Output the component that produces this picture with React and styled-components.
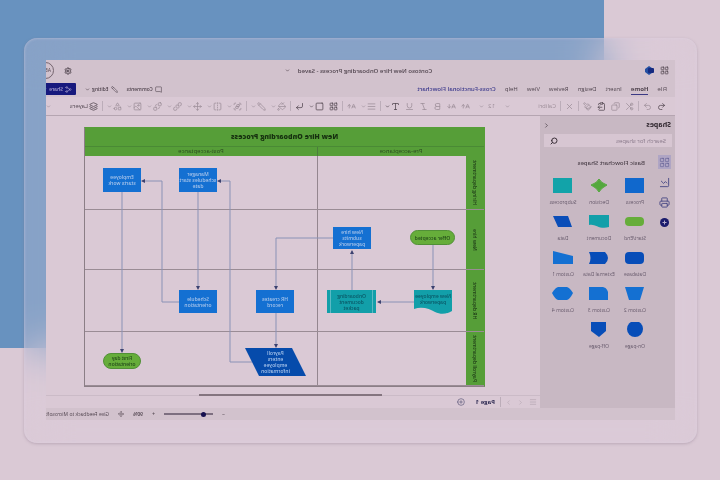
import React from 'react';
import styled, { createGlobalStyle, css } from 'styled-components';
import {
  AArrowDown,
  AArrowUp,
  AlignJustify,
  Bold,
  BringToFront,
  ChevronDown,
  ChevronLeft,
  ChevronRight,
  ClipboardPaste,
  Copy,
  CornerDownRight,
  FlipHorizontal,
  Group,
  Image,
  Italic,
  Layers,
  LayoutGrid,
  LineChart,
  Menu,
  MessageSquare,
  Move,
  PaintBucket,
  Paintbrush,
  Pencil,
  PlusCircle,
  Printer,
  Redo2,
  Scissors,
  Search,
  SendToBack,
  Settings,
  Share2,
  Shapes,
  Square,
  Type,
  Underline,
  Undo2,
  X,
} from 'lucide-react';

const GlobalStyle = createGlobalStyle`
  * {
    box-sizing: border-box;
  }
  body {
    margin: 0;
    background: #dac9d5;
    font-family: 'Open Sans', 'Noto Sans', sans-serif;
  }
  button {
    font: inherit;
    color: inherit;
    background: none;
    border: 0;
    padding: 0;
  }
`;

/* The whole scene is shown as its mirror image */
const Scene = styled.main`
  position: relative;
  min-height: 100vh;
  padding: 38px 24px 37px 23px;
  overflow: hidden;
  transform: scaleX(-1);
  background: #dac9d5;
  color: #51454f;
  font-size: 6px;
  line-height: 8px;
`;

const Backdrop = styled.div`
  position: absolute;
  top: 0;
  right: 0;
  left: 116px;
  height: 348px;
  background: #6892bf;
`;

const Frame = styled.div`
  position: relative;
  padding: 22px 22px 23px;
  border-radius: 13px;
  background: rgba(222, 206, 220, 0.27);
  backdrop-filter: blur(22px);
  box-shadow:
    0 1px 3px rgba(130, 110, 130, 0.35),
    inset 0 0 3px rgba(222, 210, 226, 0.6);
`;

const Window = styled.div`
  overflow: hidden;
  background: #d2c2cd;
`;

const Row = styled.div`
  display: flex;
  align-items: center;
  white-space: nowrap;
`;

const TitleBar = styled(Row)`
  height: 21px;
  padding-left: 6px;
  gap: 6px;
`;

const Title = styled.h1`
  display: flex;
  align-items: center;
  justify-content: center;
  gap: 8px;
  flex: 1;
  margin: 0;
  font-size: 6px;
  font-weight: 600;
`;

const Logo = styled.svg`
  width: 9px;
  height: 9px;
`;

const Avatar = styled.div`
  width: 17px;
  height: 17px;
  margin: 0 -9px 0 4px;
  padding-left: 2px;
  border: 1px solid #75656f;
  border-radius: 50%;
  font-size: 5px;
  line-height: 15px;
`;

const TabBar = styled(Row)`
  height: 16px;
  padding-left: 8px;
  gap: 9px;
`;

const Tab = styled.button`
  height: 11px;
  border-bottom: 1px solid transparent;
  ${({ $active }) =>
    $active &&
    css`
      font-weight: 700;
      border-color: #3c3a85;
    `}
  ${({ $accent }) =>
    $accent &&
    css`
      color: #3f3c8e;
      font-weight: 600;
    `}
`;

const TabActions = styled(Row)`
  gap: 9px;
  margin: 0 -10px 0 auto;
`;

const Action = styled.button`
  display: flex;
  align-items: center;
  gap: 2px;
  font-size: 5px;
  font-weight: 600;
`;

const ShareButton = styled(Action)`
  height: 12px;
  width: 40px;
  padding-left: 4px;
  background: #17197d;
  color: #a9a0cf;
  border-radius: 1px;
`;

const Toolbar = styled(Row)`
  height: 19px;
  padding-left: 9px;
  gap: 5px;
  background: #dac9d5;
  border-bottom: 1px solid #b5a5b1;
  color: #9c8d98;
`;

const Tool = styled.button`
  display: flex;
  align-items: center;
  gap: 1px;
  flex: none;
  color: ${({ $dark }) => ($dark ? '#51454f' : 'inherit')};
`;

const FontSize = styled(Tool)`
  padding: 0 4px;
  gap: 4px;
`;

const Overflow = styled(Tool)`
  margin-left: auto;
`;

const Divider = styled.span`
  flex: none;
  width: 1px;
  height: 10px;
  margin: 0 -1px;
  background: #bcadb9;
`;

const FontName = styled.button`
  display: flex;
  justify-content: space-between;
  align-items: center;
  width: 52px;
  padding-right: 1px;
`;

const Body = styled.div`
  display: flex;
  background: #dac9d5;
`;

const Panel = styled.aside`
  flex: none;
  width: 135px;
  background: #c8b8c3;
`;

const PanelHeader = styled(Row)`
  height: 18px;
  justify-content: space-between;
  padding: 0 3px 0 4px;
  color: #2e252d;
`;

const PanelTitle = styled.h2`
  margin: 0;
  font-size: 7px;
  font-weight: 700;
`;

const SearchBox = styled.label`
  display: flex;
  align-items: center;
  height: 13px;
  margin: 0 4px 0 3px;
  padding: 0 6px;
  background: #d7c6d2;
`;

const SearchInput = styled.input`
  flex: 1;
  min-width: 0;
  padding: 0;
  border: 0;
  outline: 0;
  background: none;
  font: inherit;
  &::placeholder {
    color: #89798a;
    opacity: 1;
  }
`;

const PanelBody = styled.div`
  display: flex;
  padding-top: 8px;
`;

const Rail = styled.nav`
  display: flex;
  flex-direction: column;
  align-items: center;
  gap: 6px;
  width: 20px;
  color: #4a4a86;
`;

const RailButton = styled.button`
  display: flex;
  align-items: center;
  justify-content: center;
  width: 13px;
  height: 14px;
  background: ${({ $active }) => ($active ? '#afa5c4' : 'none')};
`;

const Palette = styled.section`
  flex: 1;
  padding-top: 4px;
`;

const PaletteTitle = styled.h3`
  margin: 0 0 11px 10px;
  font-size: 6px;
  line-height: 8px;
  font-weight: 600;
`;

const PaletteGrid = styled.div`
  display: grid;
  grid-template-columns: repeat(3, 36px);
  grid-auto-rows: 36px;
  margin-left: 2px;
`;

const Stencil = styled.button`
  display: flex;
  flex-direction: column;
  align-items: center;
  gap: 6px;
  font-size: 5px;
  line-height: 7px;
  white-space: nowrap;
  color: #65586a;
`;

const StencilShape = styled.svg`
  width: 21px;
  height: 15px;
`;

const Workspace = styled.div`
  flex: 1;
  min-width: 0;
`;

const Canvas = styled.div`
  padding: 11px 0 7px 55px;
  overflow: hidden;
`;

const Chart = styled.div`
  position: relative;
  width: 401px;
  border: 1px solid #8b7e86;
  border-top-color: #569e38;
  border-left-color: #569e38;
  font-size: 5px;
  line-height: 6px;
  color: #2a4a20;
`;

const ChartTitle = styled.h2`
  margin: 0;
  background: #569e38;
  color: #16300f;
  font-size: 7px;
  font-weight: 800;
  line-height: 18px;
  text-align: center;
`;

const Phases = styled.div`
  display: grid;
  grid-template-columns: 166px 1fr;
  background: #569e38;
  border-top: 1px solid #4a8a35;
`;

const Phase = styled.div`
  font-size: 6px;
  line-height: 9px;
  text-align: center;
  & + & {
    border-left: 1px solid #4b7d3c;
  }
`;

const Lane = styled.div`
  display: grid;
  grid-template-columns: 18px 148px 1fr;
  height: ${({ $height }) => $height}px;
  border-bottom: 1px solid #9a8c95;
  &:last-of-type {
    border-bottom: 0;
  }
`;

const LaneName = styled.div`
  display: flex;
  align-items: center;
  justify-content: center;
  background: #569e38;
  writing-mode: sideways-lr;
  font-weight: 600;
  white-space: nowrap;
  color: #1d3a17;
`;

const LaneCell = styled.div`
  & + & {
    border-left: 1px solid #94868f;
  }
`;

const Connectors = styled.svg`
  position: absolute;
  top: -1px;
  left: -1px;
  width: 401px;
  height: 260px;
  fill: none;
  stroke: #8a92b6;
  stroke-width: 1;
`;

const kinds = {
  process: css`
    background: #1470d2;
  `,
  terminal: css`
    background: #66ad3a;
    border: 1px solid #519037;
    border-radius: 8px;
    color: #244c1a;
  `,
  document: css`
    background: #129fa9;
    color: #0a5867;
    padding-bottom: 6px;
    clip-path: path('M0 0H38V19C30 16 22 19 17 22C11 25 5 24 0 21Z');
  `,
  subprocess: css`
    background: #129fa9;
    color: #0a5867;
    box-shadow:
      inset 3px 0 #129fa9,
      inset 4px 0 #5cb9c4,
      inset -3px 0 #129fa9,
      inset -4px 0 #5cb9c4;
  `,
  data: css`
    background: #064bab;
    clip-path: polygon(23% 0, 100% 0, 77% 100%, 0 100%);
  `,
};

const Node = styled.div`
  position: absolute;
  display: flex;
  align-items: center;
  justify-content: center;
  left: ${({ $x }) => $x - 1}px;
  top: ${({ $y }) => $y - 1}px;
  width: ${({ $w }) => $w}px;
  height: ${({ $h }) => $h}px;
  color: #a6c3ea;
  font-weight: 600;
  text-align: center;
  white-space: pre;
  ${({ $kind }) => kinds[$kind]}
`;

const ScrollTrack = styled.div`
  height: 2px;
  border-bottom: 1px solid #cbbbc7;
`;

const ScrollThumb = styled.div`
  width: 37%;
  height: 2px;
  margin-left: 32%;
  background: #84757f;
`;

const PageTabs = styled(Row)`
  height: 12px;
  padding-left: 3px;
  gap: 5px;
  color: #b3a4b0;
`;

const PageTab = styled.button`
  padding: 0 6px 0 1px;
  font-weight: 700;
  color: #2a2750;
`;

const StatusBar = styled(Row)`
  height: 12px;
  justify-content: flex-end;
  gap: 9px;
  background: #d2c2cd;
  font-size: 5px;
  font-weight: 600;
`;

const Zoom = styled.input`
  appearance: none;
  width: 49px;
  height: 2px;
  margin: 0;
  background: #7d6f80;
  &::-webkit-slider-thumb {
    appearance: none;
    width: 5px;
    height: 5px;
    border-radius: 50%;
    background: #15104f;
  }
`;

const Feedback = styled.a`
  color: inherit;
  font-weight: 400;
  text-decoration: none;
`;

const stencils = [
  ['Process', '#1068cd', <path d="M1 0H20V15H1Z" />],
  ['Decision', '#54a83d', <path d="M10 1Q12 5 18 7Q12 10 10 14Q8 10 2 7Q8 5 10 1Z" stroke="#54a83d" />],
  ['Subprocess', '#12a3a9', <path d="M1 0H20V15H1Z" />],
  ['Start/End', '#66ad3a', <rect x="1" y="3" width="19" height="9" rx="4" />],
  ['Document', '#129fa9', <path d="M0 1H20V11C14 9 10 16 0 13Z" />],
  ['Data', '#0a4db8', <path d="M5 2H20L15 13H1Z" />],
  ['Database', '#074db8', <rect x="1" y="2" width="19" height="12" rx="4" />],
  ['External Data', '#074db8', <path d="M4 2H20Q17 8 20 14H4Q-2 8 4 2Z" />],
  ['Custom 1', '#1470d2', <path d="M0 6L20 1V14H0Z" />],
  ['Custom 2', '#1470d2', <path d="M1 1H20L16 14H5Z" />],
  ['Custom 3', '#1470d2', <path d="M6 1H20V14H1V6Q2 2 6 1Z" />],
  ['Custom 4', '#1470d2', <path d="M6 1H15Q18 2 21 7Q18 13 15 14H6Q3 13 0 7Q3 2 6 1Z" />],
  ['On-page', '#074db8', <circle cx="10" cy="7" r="8" />],
  ['Off-page', '#074db8', <path d="M3 0H18V9L10 15L3 9Z" />],
];

const lanes = [
  ['Hiring department', 54],
  ['New hire', 60],
  ['HR department', 62],
  ['Payroll department', 54],
];

const nodes = [
  { kind: 'terminal', x: 30, y: 103, w: 45, h: 15, text: 'Offer accepted' },
  { kind: 'document', x: 33, y: 163, w: 38, h: 24, text: 'New employee\npaperwork' },
  { kind: 'subprocess', x: 109, y: 163, w: 49, h: 23, text: 'Onboarding\ndocument\npacket' },
  { kind: 'process', x: 114, y: 100, w: 38, h: 22, text: 'New hire\nsubmits\npaperwork' },
  { kind: 'process', x: 191, y: 163, w: 38, h: 23, text: 'HR creates\nrecord' },
  { kind: 'data', x: 179, y: 221, w: 61, h: 28, text: 'Payroll\nenters\nemployee\ninformation' },
  { kind: 'process', x: 268, y: 41, w: 38, h: 24, text: 'Manager\nschedules start\ndate' },
  { kind: 'process', x: 268, y: 163, w: 38, h: 23, text: 'Schedule\norientation' },
  { kind: 'process', x: 344, y: 41, w: 38, h: 24, text: 'Employee\nstarts work' },
  { kind: 'terminal', x: 344, y: 226, w: 38, h: 16, text: 'First day\norientation' },
];

const routes = [
  'M52 118V162',
  'M71 175H107',
  'M133 163V124',
  'M152 111H209V162',
  'M209 186V220',
  'M233 235H255V54H267',
  'M287 65V162',
  'M306 175H323V54H343',
  'M363 65V225',
];

const arrangeTools = [Group, FlipHorizontal, Move, BringToFront, SendToBack, Image, Shapes];

const Caret = () => <ChevronDown size={5} strokeWidth={3} />;

const ToolButton = ({ icon: Icon, menu, dark, label }) => (
  <Tool $dark={dark} aria-label={label}>
    <Icon size={9} strokeWidth={2} />
    {menu && <Caret />}
  </Tool>
);

const Ribbon = () => (
  <Toolbar>
    <ToolButton icon={Undo2} dark label="Undo" />
    <ToolButton icon={Redo2} label="Redo" />
    <Divider />
    <ToolButton icon={Scissors} label="Cut" />
    <ToolButton icon={Copy} label="Copy" />
    <ToolButton icon={ClipboardPaste} dark label="Paste" />
    <ToolButton icon={Paintbrush} label="Format painter" />
    <Divider />
    <ToolButton icon={X} label="Clear" />
    <Divider />
    <FontName>
      Calibri <Caret />
    </FontName>
    <FontSize>
      12
      <Caret />
    </FontSize>
    <ToolButton icon={AArrowUp} label="Grow font" />
    <ToolButton icon={AArrowDown} label="Shrink font" />
    <ToolButton icon={Bold} label="Bold" />
    <ToolButton icon={Italic} label="Italic" />
    <ToolButton icon={Underline} label="Underline" />
    <ToolButton icon={Type} menu dark label="Font color" />
    <Divider />
    <ToolButton icon={AlignJustify} menu label="Align" />
    <ToolButton icon={AArrowUp} label="Text direction" />
    <Divider />
    <ToolButton icon={LayoutGrid} dark label="Text box" />
    <ToolButton icon={Square} menu dark label="Shape" />
    <ToolButton icon={CornerDownRight} dark label="Connector" />
    <Divider />
    <ToolButton icon={PaintBucket} menu label="Fill" />
    <ToolButton icon={Pencil} menu label="Outline" />
    <Divider />
    {arrangeTools.map((icon, i) => (
      <ToolButton key={i} icon={icon} menu label={`Arrange ${i + 1}`} />
    ))}
    <Divider />
    <Tool $dark>
      <Layers size={9} />
      Layers
    </Tool>
    <Overflow aria-label="More">
      <Caret />
    </Overflow>
  </Toolbar>
);

const ShapesPanel = () => (
  <Panel>
    <PanelHeader>
      <PanelTitle>Shapes</PanelTitle>
      <Tool aria-label="Collapse">
        <ChevronLeft size={7} color="#2e252d" />
      </Tool>
    </PanelHeader>
    <SearchBox>
      <SearchInput type="text" placeholder="Search for shapes" aria-label="Search for shapes" />
      <Search size={8} strokeWidth={3} color="#3b3039" />
    </SearchBox>
    <PanelBody>
      <Rail>
        <RailButton $active aria-label="Shapes">
          <LayoutGrid size={11} strokeWidth={1} />
        </RailButton>
        <RailButton aria-label="Charts">
          <LineChart size={11} strokeWidth={2} />
        </RailButton>
        <RailButton aria-label="Stencils">
          <Printer size={11} strokeWidth={2} />
        </RailButton>
        <RailButton aria-label="Add shapes">
          <Logo viewBox="0 0 9 9">
            <circle cx="4.500" cy="4.500" r="4.500" fill="#1b1b6c" />
            <path d="M4.500 2.500V6.500M2.500 4.500H6.500" stroke="#b4aaca" />
          </Logo>
        </RailButton>
      </Rail>
      <Palette>
        <PaletteTitle>Basic Flowchart Shapes</PaletteTitle>
        <PaletteGrid>
          {stencils.map(([name, color, shape]) => (
            <Stencil key={name}>
              <StencilShape viewBox="0 0 21 15" fill={color}>
                {shape}
              </StencilShape>
              {name}
            </Stencil>
          ))}
        </PaletteGrid>
      </Palette>
    </PanelBody>
  </Panel>
);

const Flowchart = () => (
  <Chart>
    <ChartTitle>New Hire Onboarding Process</ChartTitle>
    <Phases>
      <Phase>Pre-acceptance</Phase>
      <Phase>Post-acceptance</Phase>
    </Phases>
    {lanes.map(([name, height]) => (
      <Lane key={name} $height={height}>
        <LaneName>{name}</LaneName>
        <LaneCell />
        <LaneCell />
      </Lane>
    ))}
    <Connectors viewBox="0 0 401 260">
      <defs>
        <marker id="arrow" viewBox="0 0 4 4" refX="3" refY="2" markerWidth="4" markerHeight="4" orient="auto">
          <path d="M0 0L4 2L0 4Z" fill="#3c4270" stroke="none" />
        </marker>
      </defs>
      {routes.map((d) => (
        <path key={d} d={d} markerEnd="url(#arrow)" />
      ))}
    </Connectors>
    {nodes.map(({ kind, x, y, w, h, text }) => (
      <Node key={text} $kind={kind} $x={x} $y={y} $w={w} $h={h}>
        {text}
      </Node>
    ))}
  </Chart>
);

const App = () => {
  return (
    <>
      <GlobalStyle />
      <Scene>
        <Backdrop />
        <Frame>
          <Window>
            <TitleBar>
              <LayoutGrid size={9} />
              <Logo viewBox="0 0 9 9">
                <path d="M5 0L9 3V6L5 9L2 7V2Z" fill="#2450a2" />
                <rect y="2" width="6" height="5" rx="1" fill="#152a80" />
              </Logo>
              <Title>
                Contoso New Hire Onboarding Process - Saved
                <Caret />
              </Title>
              <Settings size={8} strokeWidth={3} />
              <Avatar>AB</Avatar>
            </TitleBar>
            <TabBar>
              <Tab>File</Tab>
              <Tab $active>Home</Tab>
              <Tab>Insert</Tab>
              <Tab>Design</Tab>
              <Tab>Review</Tab>
              <Tab>View</Tab>
              <Tab>Help</Tab>
              <Tab $accent>Cross-Functional Flowchart</Tab>
              <TabActions>
                <Action>
                  <MessageSquare size={7} />
                  Comments
                </Action>
                <Action>
                  <Pencil size={7} />
                  Editing
                  <Caret />
                </Action>
                <ShareButton>
                  <Share2 size={7} />
                  Share
                  <Caret />
                </ShareButton>
              </TabActions>
            </TabBar>
            <Ribbon />
            <Body>
              <ShapesPanel />
              <Workspace>
                <Canvas>
                  <Flowchart />
                </Canvas>
                <ScrollTrack>
                  <ScrollThumb />
                </ScrollTrack>
                <PageTabs>
                  <Menu size={8} />
                  <ChevronLeft size={7} />
                  <ChevronRight size={7} />
                  <Divider />
                  <PageTab>Page 1</PageTab>
                  <PlusCircle size={8} color="#5c5878" />
                </PageTabs>
              </Workspace>
            </Body>
            <StatusBar>
              <span>−</span>
              <Zoom type="range" min="0" max="100" defaultValue="16" aria-label="Zoom" />
              <span>+</span>
              <span>90%</span>
              <Move size={6} />
              <Feedback href="#">Give Feedback to Microsoft</Feedback>
            </StatusBar>
          </Window>
        </Frame>
      </Scene>
    </>
  );
};

export default App;
